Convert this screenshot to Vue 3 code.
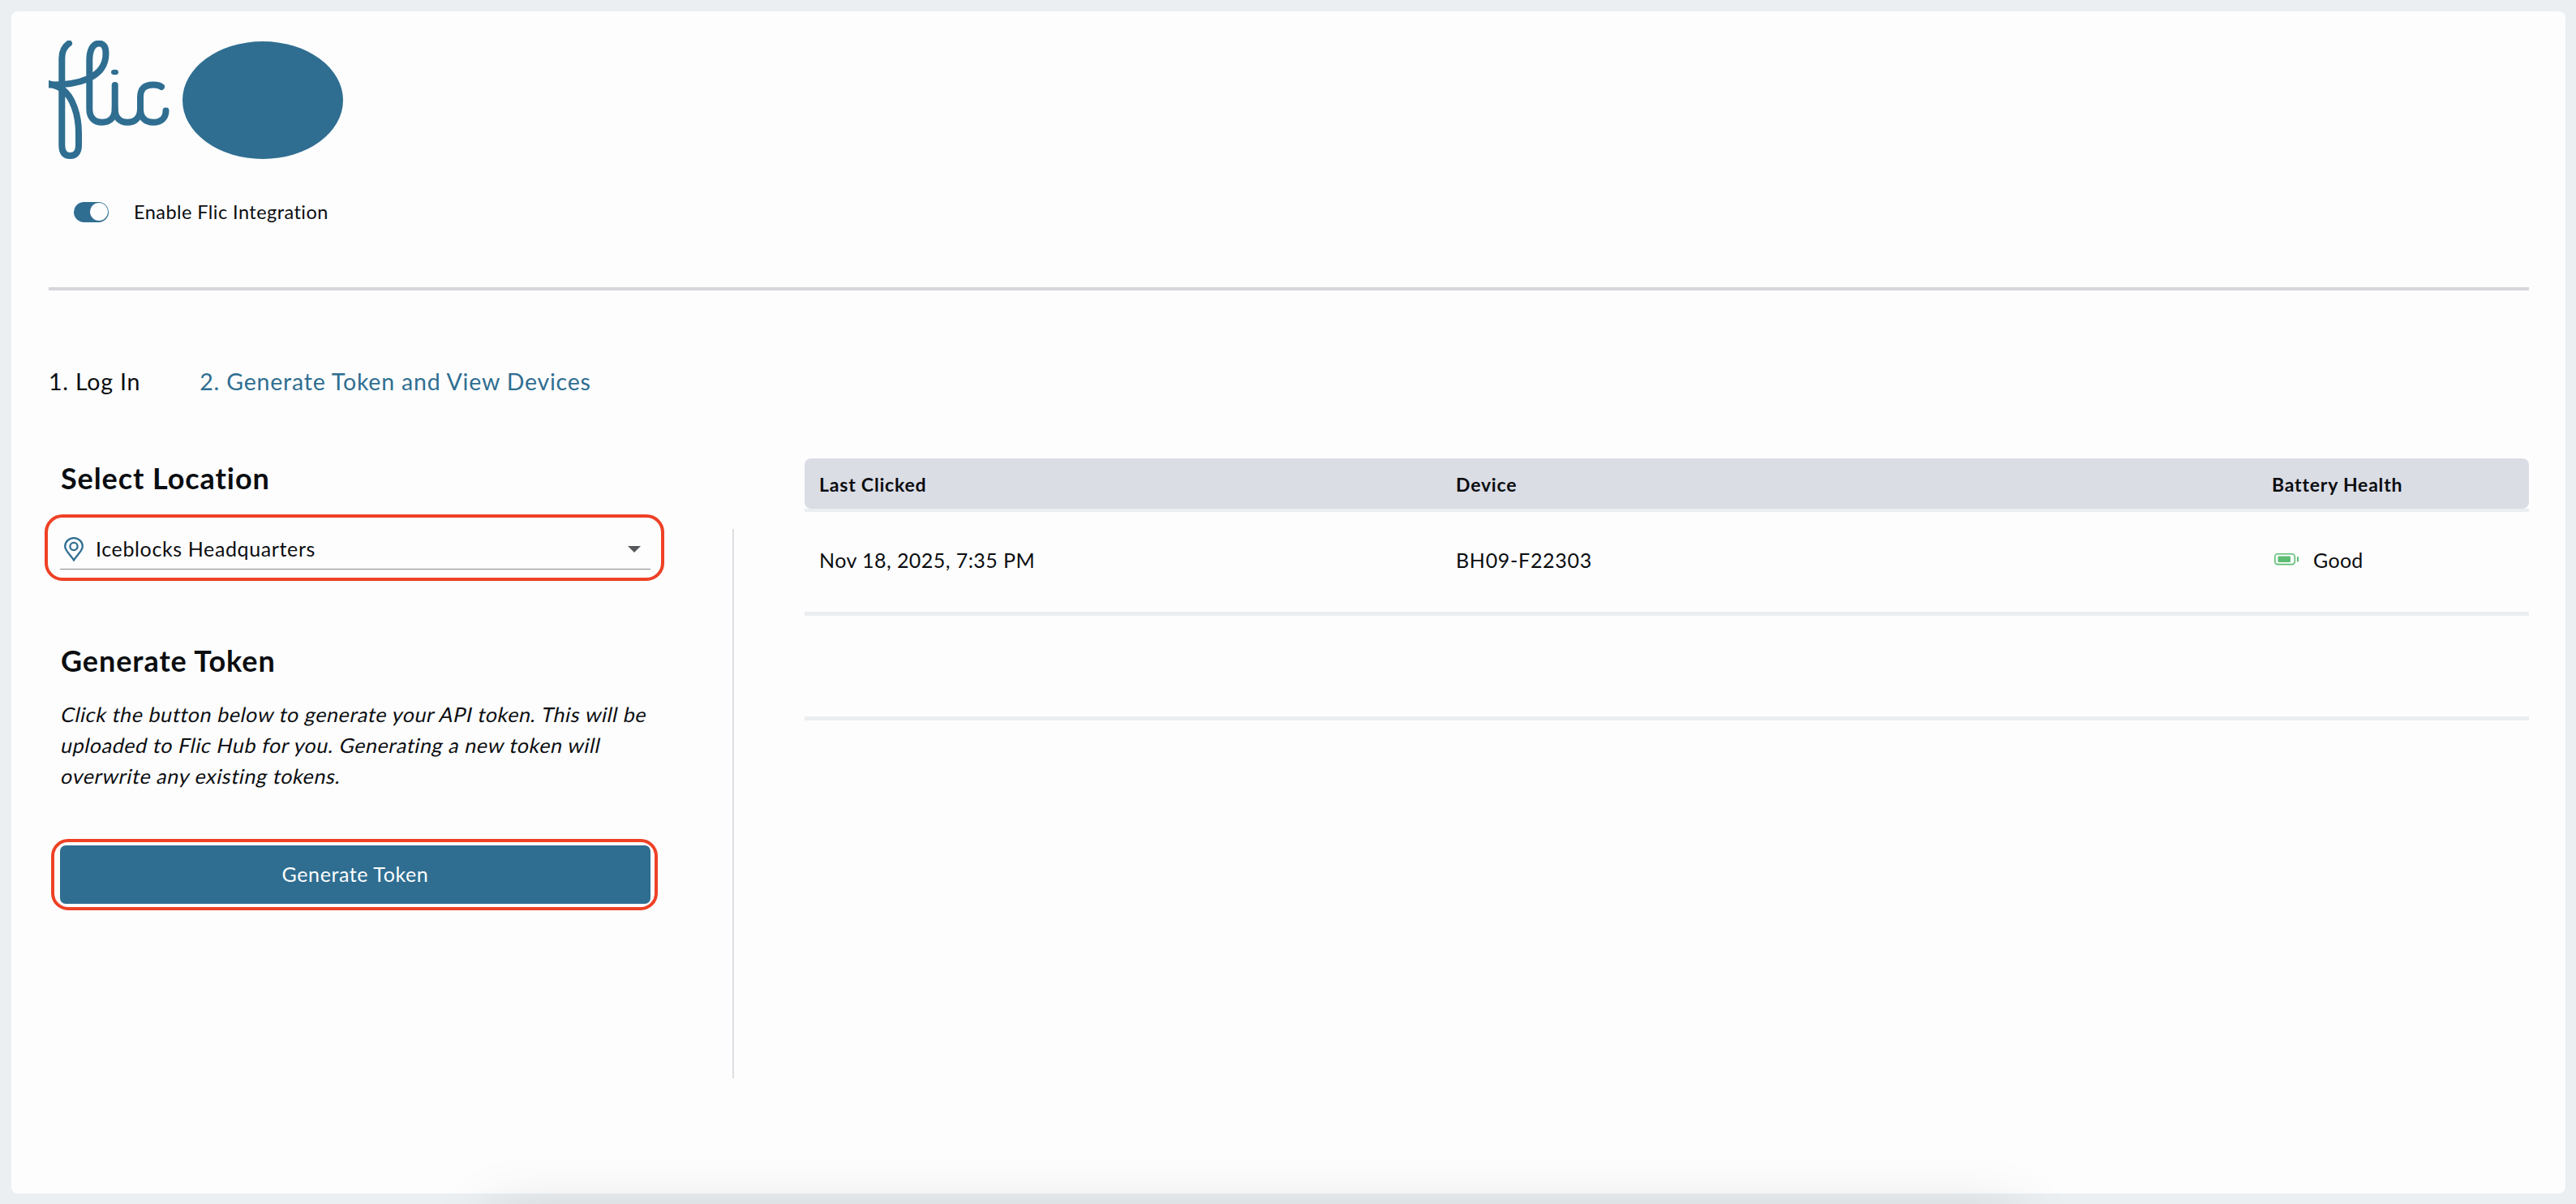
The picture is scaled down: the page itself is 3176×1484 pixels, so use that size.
<script setup>
import { ref } from 'vue'

const enabled = ref(true)
const activeStep = ref(2)
const location = ref('Iceblocks Headquarters')

const steps = [
  { id: 1, label: '1. Log In' },
  { id: 2, label: '2. Generate Token and View Devices' },
]

const rows = [
  { id: 1, lastClicked: 'Nov 18, 2025, 7:35 PM', device: 'BH09-F22303', battery: 'Good' },
  { id: 2, lastClicked: '', device: '', battery: '' },
]
</script>

<template>
  <div class="page">
    <main class="card">
      <header class="intro">
        <svg class="logo" viewBox="0 0 364 146" role="img" aria-label="Flic">
          <g fill="none" stroke="#2f6e91" stroke-width="8" stroke-linecap="round" stroke-linejoin="round">
            <path d="M25 3.500 C19 7.500 16.3 14 16.3 22 V129 C16.3 138 20 142 26.5 142 C33 142 37 138 37 129 V114 C37 92 30 70 17 60 C11 56 6 55 0 53" />
            <path d="M0 54.500 C35 55 70.500 47 70.500 16 C70.500 8 68 3.600 62 3.600 C54 3.600 50.300 13 50.300 24 V84 C50.300 95 56 100.800 66 100.800 C76 100.800 81.700 94 81.700 84 V55" />
            <path d="M81.700 84 C81.700 94 87 100.800 97 100.800 C107 100.800 113 94 113 84 V70 C113 59 119 54.500 129 54.500 C134 54.500 137 55.500 139 57" />
            <path d="M113 84 C113 95 119 100.800 129 100.800 C139 100.800 144.500 95 144.500 86.500" />
          </g>
          <ellipse cx="81.500" cy="39" rx="4.500" ry="3.300" fill="#2f6e91" />
          <ellipse cx="264" cy="73.500" rx="99" ry="72.500" fill="#2f6e91" />
        </svg>
        <label class="toggle-row">
          <button class="toggle" :class="{ on: enabled }" type="button" @click="enabled = !enabled">
            <span class="knob"></span>
          </button>
          <span class="toggle-label">Enable Flic Integration</span>
        </label>
      </header>

      <nav class="steps">
        <a
          v-for="step in steps"
          :key="step.id"
          class="step"
          :class="{ active: step.id === activeStep }"
          @click="activeStep = step.id"
        >{{ step.label }}</a>
      </nav>

      <div class="content">
        <section class="setup">
          <h2 class="heading select-heading">Select Location</h2>
          <div class="outlined select-outline">
            <div class="select">
              <svg class="pin" viewBox="0 0 24 30" fill="none" stroke="#2f6e91" stroke-width="2.300">
                <path d="M12 28.500 C9 23 1.200 17 1.200 11.500 A10.800 10.400 0 0 1 22.800 11.500 C22.800 17 15 23 12 28.500 Z" />
                <circle cx="12" cy="11.500" r="4.600" />
              </svg>
              <span class="select-value">{{ location }}</span>
              <span class="caret"></span>
            </div>
          </div>

          <h2 class="heading token-heading">Generate Token</h2>
          <p class="description">
            <span>Click the button below to generate your API token. This will be</span>
            <span>uploaded to Flic Hub for you. Generating a new token will</span>
            <span>overwrite any existing tokens.</span>
          </p>
          <div class="outlined button-outline">
            <button class="generate" type="button">Generate Token</button>
          </div>
        </section>

        <div class="separator"></div>

        <section class="devices">
          <div class="table-head">
            <span>Last Clicked</span>
            <span>Device</span>
            <span>Battery Health</span>
          </div>
          <div class="head-rule"></div>
          <div v-for="row in rows" :key="row.id" class="table-row">
            <span class="date">{{ row.lastClicked }}</span>
            <span class="device">{{ row.device }}</span>
            <span v-if="row.battery" class="battery">
              <svg class="battery-icon" viewBox="0 0 32 16">
                <rect x="1.800" y="1.800" width="24.500" height="12.800" rx="3.500" fill="none" stroke="#5dbd73" stroke-width="1.600" />
                <rect x="5.500" y="4.500" width="15.500" height="7.500" rx="1" fill="#5dbd73" />
                <rect x="29" y="5" width="2" height="6.500" rx="0.800" fill="#5dbd73" />
              </svg>
              <span class="good">{{ row.battery }}</span>
            </span>
          </div>
        </section>
      </div>
    </main>
    <div class="bottom-shadow"></div>
  </div>
</template>

<style>
body {
  margin: 0;
  background: #ebeff2;
}
</style>

<style scoped>
.page {
  position: relative;
  box-sizing: border-box;
  width: 100%;
  height: 1484px;
  padding: 14px 13px 13px 14px;
  overflow: hidden;
  background: #ebeff2;
  color: #0b0d10;
  font-family: Lato, 'Open Sans', sans-serif;
  font-size: 25px;
}

.card {
  box-sizing: border-box;
  height: 1457px;
  padding: 36px 45px 0 46px;
  border-radius: 8px;
  background: #fdfdfe;
}

.intro {
  box-sizing: border-box;
  height: 308px;
  border-bottom: 4px solid #d4d6d9;
}

.logo {
  display: block;
  width: 364px;
  height: 146px;
}

.toggle-row {
  display: flex;
  align-items: center;
  gap: 31px;
  height: 32px;
  margin: 49px 0 0 31px;
}

.toggle {
  display: flex;
  justify-content: flex-start;
  width: 43px;
  height: 25px;
  padding: 1px;
  border: 0;
  border-radius: 13px;
  background: #9aa3aa;
  cursor: pointer;
}

.toggle.on {
  justify-content: flex-end;
  background: #2f6e91;
}

.knob {
  width: 22px;
  height: 22px;
  border-radius: 50%;
  background: #fdfdfe;
}

.toggle-label {
  font-size: 23.5px;
  letter-spacing: 0.45px;
}

.steps {
  display: flex;
  gap: 73px;
  height: 40px;
  margin-top: 92px;
  font-size: 28.5px;
  letter-spacing: 0.8px;
  line-height: 40px;
  white-space: nowrap;
}

.step {
  cursor: pointer;
}

.step.active {
  color: #2f6e91;
}

.content {
  display: flex;
  align-items: flex-start;
  margin-top: 75px;
}

.setup {
  flex: none;
  width: 760px;
}

.heading {
  height: 44px;
  margin: 0 0 0 15px;
  font-size: 36px;
  font-weight: 700;
  letter-spacing: 0.92px;
  line-height: 44px;
  white-space: nowrap;
}

.select-heading {
  margin-top: 2px;
}

.outlined {
  box-sizing: border-box;
  border: 4px solid #ee4126;
}

.select-outline {
  width: 764px;
  height: 82px;
  margin: 23px 0 0 -5px;
  padding: 15px 13px 0 15px;
  border-radius: 22px;
}

.select {
  display: flex;
  align-items: center;
  height: 48px;
  padding: 0 12px 0 5px;
  border-bottom: 1px solid #85888c;
}

.pin {
  width: 24px;
  height: 30px;
}

.select-value {
  flex: 1;
  margin-left: 15px;
  padding-bottom: 2px;
  letter-spacing: 0.63px;
}

.caret {
  border: 8px solid transparent;
  border-top-color: #55585c;
  border-bottom: 0;
}

.token-heading {
  margin-top: 76px;
}

.description {
  margin: 25px 0 0 16px;
  letter-spacing: 0.62px;
  line-height: 38px;
  white-space: nowrap;
}

/* slanted upright face, wider than the real italic */
.description span {
  display: block;
  transform: skewX(-12deg);
}

.button-outline {
  width: 748px;
  height: 88px;
  margin: 59px 0 0 3px;
  padding: 4px 5px 4px 7px;
  border-radius: 21px;
}

.generate {
  width: 728px;
  height: 72px;
  padding: 0 0 2px;
  border: 0;
  border-radius: 7px;
  background: #2f6e91;
  color: #fdfdfe;
  font: inherit;
  letter-spacing: 0.6px;
  cursor: pointer;
}

.separator {
  flex: none;
  width: 2px;
  height: 677px;
  margin: 87px 0 0 83px;
  background: #dcdee1;
}

.devices {
  flex: 1;
  margin-left: 87px;
}

.table-head,
.table-row {
  display: grid;
  grid-template-columns: 785px 1006px 1fr;
  align-items: center;
  box-sizing: border-box;
  padding-left: 18px;
}

.table-head {
  height: 62px;
  padding-top: 2px;
  border-radius: 8px;
  background: #dbdde5;
  font-size: 23px;
  font-weight: 700;
  letter-spacing: 0.8px;
}

.head-rule {
  height: 4px;
  background: #ebeef1;
}

.table-row {
  height: 128px;
  padding-bottom: 6px;
  border-bottom: 5px solid #ebeef1;
}

.table-row:last-child {
  height: 129px;
}

.date {
  letter-spacing: 0.45px;
}

.device {
  letter-spacing: 0.7px;
}

.battery {
  display: flex;
  align-items: center;
}

.battery-icon {
  width: 32px;
  height: 16px;
  margin: -1px 0 0 2px;
}

.good {
  margin-left: 17px;
  letter-spacing: 0.3px;
}

/* top of the shadow thrown by a panel sitting below the fold */
.bottom-shadow {
  position: absolute;
  top: 1500px;
  left: 606px;
  width: 1880px;
  height: 60px;
  box-shadow: 0 0 76px rgba(0, 0, 0, 0.17);
}
</style>
